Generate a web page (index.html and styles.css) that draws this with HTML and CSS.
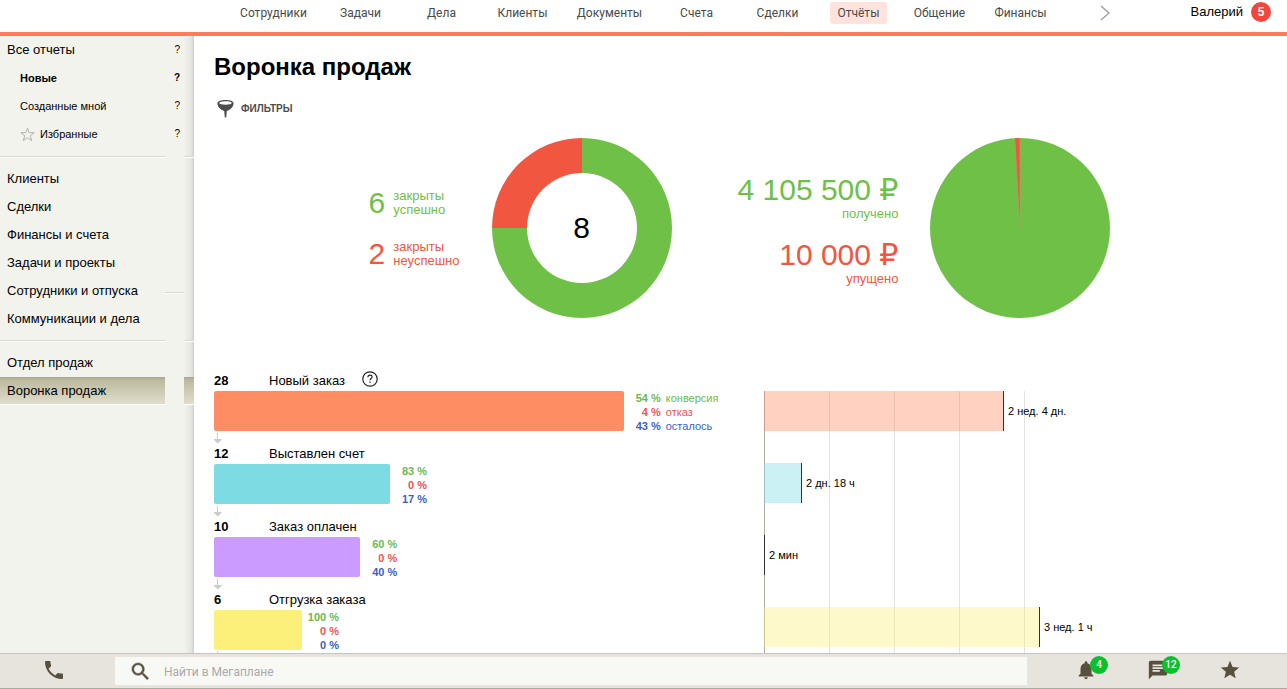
FILE: index.html
```html
<!DOCTYPE html>
<html lang="ru">
<head>
<meta charset="utf-8">
<title>Воронка продаж</title>
<link rel="stylesheet" href="styles.css">
</head>
<body>
<div class="app">
  <header class="topbar">
    <nav class="tabs">
      <a class="tab tab-wide" href="#"><span>Сотрудники</span></a>
      <a class="tab" href="#"><span>Задачи</span></a>
      <a class="tab" href="#"><span>Дела</span></a>
      <a class="tab" href="#"><span>Клиенты</span></a>
      <a class="tab tab-wide" href="#"><span>Документы</span></a>
      <a class="tab" href="#"><span>Счета</span></a>
      <a class="tab" href="#"><span>Сделки</span></a>
      <a class="tab tab-active" href="#" aria-current="page"><span>Отчёты</span></a>
      <a class="tab" href="#"><span>Общение</span></a>
      <a class="tab" href="#"><span>Финансы</span></a>
      <button class="more" type="button" aria-label="Ещё"><svg width="10" height="16" viewBox="0 0 10 16"><path d="M1 1l8 7-8 7" fill="none" stroke="#999" stroke-width="1.2"/></svg></button>
    </nav>
    <a class="user" href="#">Валерий <span class="user-count">5</span></a>
  </header>

  <div class="middle">
    <aside class="sidebar">
      <ul class="menu">
        <li class="item"><a href="#">Все отчеты</a><button class="hint" type="button">?</button></li>
        <li class="item sub"><a href="#"><b>Новые</b></a><button class="hint hint-strong" type="button">?</button></li>
        <li class="item sub"><a href="#">Созданные мной</a><button class="hint" type="button">?</button></li>
        <li class="item sub"><a href="#"><svg width="15" height="15" viewBox="0 0 15 15"><path d="M7.5 1l1.7 4.7h5L10.200 8.700l1.500 4.900-4.200-2.900-4.200 2.900 1.500-4.900L.8 5.700h5z" fill="none" stroke="#aaa" stroke-width=".9"/></svg>Избранные</a><button class="hint" type="button">?</button></li>
      </ul>
      <hr class="rule">
      <ul class="menu">
        <li class="item"><a href="#">Клиенты</a></li>
        <li class="item"><a href="#">Сделки</a></li>
        <li class="item"><a href="#">Финансы и счета</a></li>
        <li class="item"><a href="#">Задачи и проекты</a></li>
        <li class="item item-notch"><a href="#">Сотрудники и отпуска</a></li>
        <li class="item"><a href="#">Коммуникации и дела</a></li>
      </ul>
      <hr class="rule rule-tight">
      <ul class="menu">
        <li class="item"><a href="#">Отдел продаж</a></li>
        <li class="item item-active"><a href="#">Воронка продаж</a></li>
      </ul>
    </aside>

    <main class="content">
      <h1 class="title">Воронка продаж</h1>
      <button class="filters" type="button">
        <svg width="18" height="18" viewBox="0 0 18 18"><path fill-rule="evenodd" d="M8.500 0C13 0 16.600 1.200 16.600 3.300c0 3.600-3.200 6.800-6.800 7.600L9.200 17.500H7.800L7.200 10.900C3.600 10.100.4 6.900.4 3.300.4 1.200 4 0 8.500 0zm0 1.200c-3.500 0-6.200.7-6.200 1.800s2.700 1.700 6.200 1.700 6.200-.6 6.200-1.700-2.700-1.800-6.200-1.800z" fill="#4d4d4d"/></svg>
        <span>ФИЛЬТРЫ</span>
      </button>

      <section class="summary">
        <div class="card">
          <div class="deals">
            <p class="deal good"><span class="big">6</span><span>закрыты<br>успешно</span></p>
            <p class="deal bad"><span class="big">2</span><span>закрыты<br>неуспешно</span></p>
          </div>
          <div class="chart">
            <svg width="180" height="180" viewBox="0 0 180 180">
              <path d="M90 0a90 90 0 1 1-90 90h35a55 55 0 1 0 55-55z" fill="#6fc047"/>
              <path d="M0 90A90 90 0 0 1 90 0v35a55 55 0 0 0-55 55z" fill="#f15640"/>
            </svg>
            <span class="chart-total">8</span>
          </div>
        </div>
        <div class="card">
          <div class="sums">
            <p class="sum good"><span class="big">4 105 500 <span class="rub">₽</span></span><span>получено</span></p>
            <p class="sum bad"><span class="big">10 000 <span class="rub">₽</span></span><span>упущено</span></p>
          </div>
          <div class="chart">
            <svg width="180" height="180" viewBox="0 0 180 180">
              <circle cx="90" cy="90" r="90" fill="#6fc047"/>
              <path d="M90 90L84.800.2 90 0z" fill="#f15640"/>
              <path d="M90 90V0M90 90L84.800.2" stroke="#c9966a" stroke-width=".6"/>
            </svg>
          </div>
        </div>
      </section>

      <section class="report">
        <ol class="funnel">
          <li class="stage">
            <div class="stage-head"><b>28</b><span>Новый заказ</span><button class="help" type="button" aria-label="Справка"><svg width="16" height="16" viewBox="0 0 16 16" fill="none" stroke="#222"><circle cx="8" cy="8" r="7.200" stroke-width="1.200"/><path d="M5.900 6.300c0-1.400.9-2.200 2.100-2.200s2.100.8 2.100 1.900c0 1.500-2.100 1.600-2.100 3.300M8 10.600v1.300" stroke-width="1.100"/></svg></button></div>
            <div class="stage-body">
              <div class="bar orange" style="width:74.5%"></div>
              <dl class="rates"><dd class="conv">54 %</dd><dt class="conv">конверсия</dt><dd class="lost">4 %</dd><dt class="lost">отказ</dt><dd class="left">43 %</dd><dt class="left">осталось</dt></dl>
            </div>
            <svg class="arrow" width="8" height="13" viewBox="0 0 8 13"><path d="M3.500 1.500v6.500" stroke="#ccc"/><path d="M0 8h7.500v1L3.800 12.500 0 9z" fill="#ccc"/></svg>
          </li>
          <li class="stage">
            <div class="stage-head"><b>12</b><span>Выставлен счет</span></div>
            <div class="stage-body">
              <div class="bar cyan" style="width:32%"></div>
              <dl class="rates"><dd class="conv">83 %</dd><dd class="lost">0 %</dd><dd class="left">17 %</dd></dl>
            </div>
            <svg class="arrow" width="8" height="13" viewBox="0 0 8 13"><path d="M3.500 1.500v6.500" stroke="#ccc"/><path d="M0 8h7.500v1L3.800 12.500 0 9z" fill="#ccc"/></svg>
          </li>
          <li class="stage">
            <div class="stage-head"><b>10</b><span>Заказ оплачен</span></div>
            <div class="stage-body">
              <div class="bar violet" style="width:26.6%"></div>
              <dl class="rates"><dd class="conv">60 %</dd><dd class="lost">0 %</dd><dd class="left">40 %</dd></dl>
            </div>
            <svg class="arrow" width="8" height="13" viewBox="0 0 8 13"><path d="M3.500 1.500v6.500" stroke="#ccc"/><path d="M0 8h7.500v1L3.800 12.500 0 9z" fill="#ccc"/></svg>
          </li>
          <li class="stage">
            <div class="stage-head"><b>6</b><span>Отгрузка заказа</span></div>
            <div class="stage-body">
              <div class="bar yellow" style="width:16%"></div>
              <dl class="rates"><dd class="conv">100 %</dd><dd class="lost">0 %</dd><dd class="left">0 %</dd></dl>
            </div>
            <svg class="arrow" width="8" height="13" viewBox="0 0 8 13"><path d="M3.500 1.500v6.500" stroke="#ccc"/><path d="M0 8h7.500v1L3.800 12.500 0 9z" fill="#ccc"/></svg>
          </li>
        </ol>
        <ol class="times">
          <li class="time"><div class="span orange-soft" style="width:240px"></div>2 нед. 4 дн.</li>
          <li class="time"><div class="span cyan-soft" style="width:38px"></div>2 дн. 18 ч</li>
          <li class="time"><div class="span" style="width:1px"></div>2 мин</li>
          <li class="time"><div class="span yellow-soft" style="width:276px"></div>3 нед. 1 ч</li>
        </ol>
      </section>
    </main>
  </div>

  <footer class="dock">
    <button class="dock-btn dock-phone" type="button" aria-label="Позвонить"><svg width="24" height="24" viewBox="0 0 24 24"><path d="M6.620 10.790c1.440 2.830 3.760 5.140 6.590 6.590l2.200-2.200c.27-.27.67-.36 1.020-.24 1.120.37 2.330.57 3.570.57.55 0 1 .45 1 1V20c0 .55-.45 1-1 1C10.610 21 3 13.390 3 4c0-.55.45-1 1-1h3.500c.55 0 1 .45 1 1 0 1.250.2 2.450.57 3.570.11.35.03.74-.25 1.020z"/></svg></button>
    <label class="search">
      <svg width="23" height="23" viewBox="0 0 24 24"><path stroke="#57503f" stroke-width=".5" d="M15.500 14h-.79l-.28-.27A6.470 6.470 0 0 0 16 9.500 6.500 6.500 0 1 0 9.500 16c1.610 0 3.090-.59 4.230-1.570l.27.28v.79l5 4.990L20.490 19zm-6 0a4.500 4.500 0 1 1 0-9 4.500 4.500 0 0 1 0 9z"/></svg>
      <input type="text" placeholder="Найти в Мегаплане" aria-label="Поиск">
    </label>
    <div class="dock-tools">
      <button class="dock-btn" type="button" aria-label="Уведомления"><svg width="22" height="22" viewBox="0 0 24 24"><path d="M12 22c1.100 0 2-.9 2-2h-4c0 1.100.89 2 2 2zm6-6v-5c0-3.070-1.640-5.640-4.500-6.320V4a1.500 1.500 0 0 0-3 0v.68C7.630 5.360 6 7.920 6 11v5l-2 2v1h16v-1z"/></svg><span class="badge">4</span></button>
      <button class="dock-btn" type="button" aria-label="Сообщения"><svg width="22" height="22" viewBox="0 0 24 24"><path d="M20 2H4c-1.100 0-1.990.9-1.990 2L2 22l4-4h14c1.100 0 2-.9 2-2V4c0-1.100-.9-2-2-2zM6 9h12v2H6zm8 5H6v-2h8zm4-6H6V6h12z"/></svg><span class="badge">12</span></button>
      <button class="dock-btn" type="button" aria-label="Избранное"><svg width="22" height="22" viewBox="0 0 24 24"><path d="M12 17.270L18.180 21l-1.640-7.030L22 9.240l-7.190-.61L12 2 9.190 8.630 2 9.240l5.460 4.730L5.820 21z"/></svg></button>
    </div>
  </footer>
</div>
</body>
</html>
```
FILE: styles.css
```css
* { box-sizing: border-box; }
body, h1, p, ul, ol, dl, dd { margin: 0; padding: 0; }
ul, ol { list-style: none; }
a { color: inherit; text-decoration: none; }
button { border: 0; padding: 0; background: none; font: inherit; color: inherit; cursor: pointer; }
svg { display: block; flex: none; }

body { font: 13px/16px "Liberation Sans", Arial, sans-serif; color: #000; background: #fff; }
.app { display: grid; grid-template-rows: auto minmax(0, 1fr) auto; height: 100vh; overflow: hidden; }

/* Top bar */
.topbar { display: flex; justify-content: space-between; align-items: flex-start; padding: 2px 16px 8px 227px; border-bottom: 4px solid #ff7b5a; }
.tabs { display: flex; align-items: center; font: 12px/22px Roboto, sans-serif; color: #4a4a4a; }
.tab { min-width: 81px; text-align: center; white-space: nowrap; }
.tab-wide { min-width: 93px; }
.tab span { display: inline-block; padding: 0 8px; border-radius: 3px; }
.tab-active span { background: #ffe3dc; }
.more { margin-left: 39px; }
.user { display: flex; align-items: center; gap: 8px; line-height: 22px; height: 20px; }
.user-count { display: grid; place-items: center; width: 20px; height: 20px; border-radius: 50%; background: #f4453c; color: #fff; font-size: 12px; line-height: 20px; font-weight: 700; }

/* Sidebar */
.middle { display: grid; grid-template-columns: 194px minmax(0, 1fr); min-height: 0; }
.sidebar { background: linear-gradient(to left, #d0d0cb, #e6e6e1 3px, #f3f3ee 10px); }
.item { display: flex; justify-content: space-between; align-items: center; height: 28px; padding: 0 14px 0 7px; }
.item a { display: flex; align-items: center; gap: 5px; }
.sub { padding-left: 20px; font-size: 11px; }
.hint { font-size: 10px; }
.hint-strong { font-weight: 700; }
.rule { height: 2px; margin: 8px 0 7px; border: 0; background: linear-gradient(to right, transparent 165px, #f3f3ee 165px, #f3f3ee 184px, transparent 184px), linear-gradient(#d8d8d3 1px, #fff 1px); }
.rule-tight { margin-top: 7px; }
.item-notch { background: linear-gradient(#d8d8d3 1px, #fff 1px) 165px 15px / 19px 2px no-repeat; }
.item-active { background: linear-gradient(to right, transparent 165px, #f3f3ee 165px, #f3f3ee 184px, transparent 184px), linear-gradient(#a9a68c, #bcb99f 3px, #e0dec9 27px, #fff 27px); }

/* Report page */
.content { padding: 16px 0 0 20px; overflow: hidden; }
.title { font-size: 24px; line-height: 30px; }
.filters { display: flex; align-items: center; gap: 6px; margin: 18px 0 0 3px; font-size: 10px; line-height: 18px; font-weight: 700; color: #4d4d4d; }
.summary { display: flex; justify-content: center; gap: 66px; padding: 20px 22px 0 0; }
.card { display: flex; align-items: center; gap: 32px; }
.good { color: #6fc047; }
.bad { color: #f15640; }
.big { font-size: 30px; line-height: 30px; white-space: nowrap; }
.rub { font-family: "DejaVu Sans", sans-serif; line-height: 1; }
.deals { display: grid; gap: 23px; line-height: 14px; }
.deal { display: flex; align-items: center; gap: 8px; height: 28px; }
.sums { display: grid; gap: 18px; padding-top: 6px; text-align: right; }
.sum { display: grid; grid-template-rows: 30px 16px; gap: 1px; }
.chart { display: grid; place-items: center; }
.chart > * { grid-area: 1 / 1; }
.chart-total { font-size: 30px; line-height: 30px; }

.report { display: grid; grid-template-columns: 550fr 523fr; margin-top: 53px; }
.stage-head { display: flex; align-items: center; height: 20px; }
.stage-head b { width: 55px; }
.help { margin: -4px 0 0 17px; }
.stage-body { display: flex; height: 40px; }
.bar { flex: none; border-radius: 2px; }
.orange { background: #ff8d63; }
.cyan { background: #7ddbe3; }
.violet { background: #cb9bff; }
.yellow { background: #fcf07a; }
.rates { display: grid; grid-template-columns: 37px auto; column-gap: 5px; align-content: start; font-size: 11px; line-height: 14px; }
.rates dd { grid-column: 1; text-align: right; font-weight: 700; white-space: nowrap; }
.conv { color: #6cb950; }
.lost { color: #ef5350; }
.left { color: #3b5fc4; }

.times { display: grid; align-content: start; gap: 32px; margin-top: 20px; border-left: 1px solid #aeaba0; background: repeating-linear-gradient(to right, transparent 0, transparent 64px, #e2e2e2 64px, #e2e2e2 65px) 0 0 / 261px 100% no-repeat; }
.time { display: flex; align-items: center; gap: 4px; height: 40px; margin-left: -1px; font-size: 11px; }
.span { height: 40px; border-right: 1px solid #333; }
.orange-soft { background: rgba(255, 141, 99, .4); }
.cyan-soft { background: rgba(125, 219, 227, .4); }
.yellow-soft { background: rgba(252, 240, 122, .4); }

/* Bottom dock */
.dock { display: grid; grid-template-columns: 115px minmax(0, 1fr) 260px; padding: 3px 0 3px; border-top: 1px solid #c7c4bb; border-bottom: 1px solid #aaa8a3; background: #e7e4dd; fill: #57503f; }
.dock-btn { display: grid; place-items: center; position: relative; padding-bottom: 2px; }
.dock-phone { padding-right: 8px; }
.search { display: flex; align-items: center; gap: 12px; height: 28px; padding-left: 14px; background: #f8f9f4; }
.search input { flex: 1; min-width: 0; border: 0; padding: 1px 0 0; outline: 0; background: none; font: 12px/16px Roboto, sans-serif; color: #333; }
.search input::placeholder { color: #aaa; opacity: 1; }
.dock-tools { display: grid; grid-template-columns: repeat(3, 1fr); padding: 0 21px 0 23px; }
.badge { position: absolute; left: 40px; top: -1px; display: grid; place-items: center; width: 18px; height: 18px; border-radius: 50%; background: #0cbf31; color: #fff; font: 500 10px/18px Roboto, sans-serif; }
```
